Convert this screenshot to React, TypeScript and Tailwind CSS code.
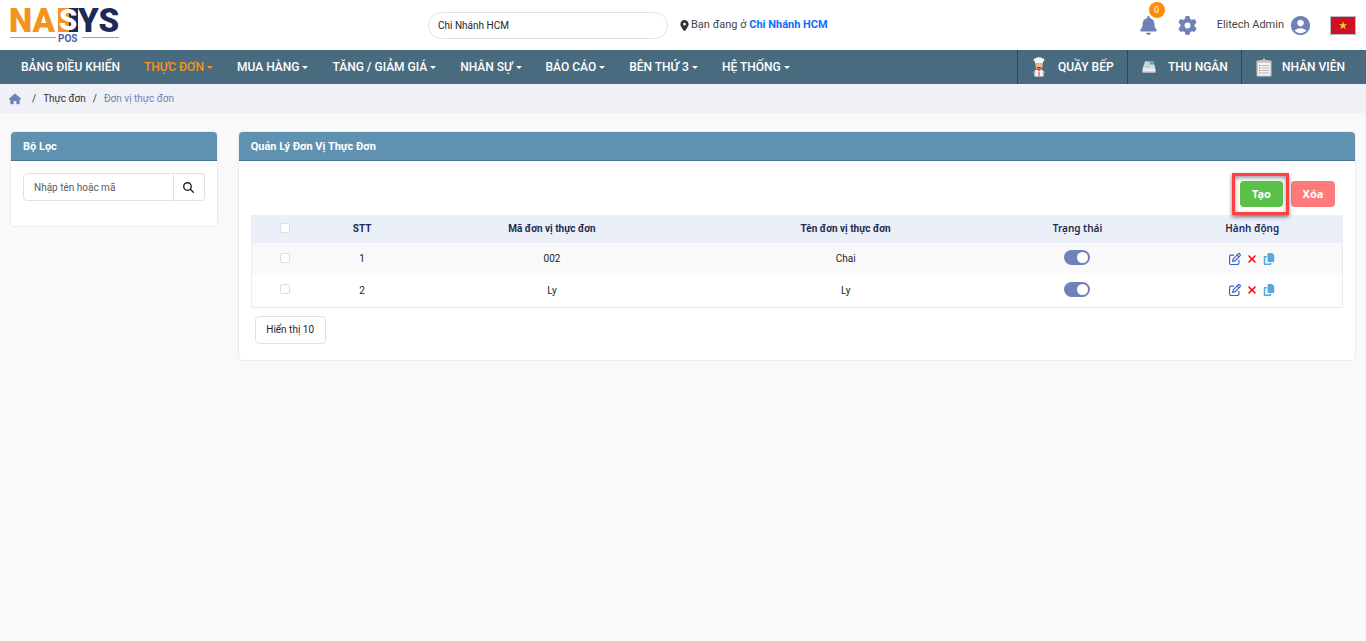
import { useState } from 'react'
import { FaBell, FaCopy, FaGear, FaHouse, FaLocationDot, FaMagnifyingGlass, FaRegPenToSquare, FaXmark } from 'react-icons/fa6'
import { MdAccountCircle } from 'react-icons/md'

type MenuItem = { label: string; dropdown: boolean; active?: boolean }
type Unit = { id: number; code: string; name: string; enabled: boolean }

const menu: MenuItem[] = [
  { label: 'BẢNG ĐIỀU KHIỂN', dropdown: false },
  { label: 'THỰC ĐƠN', dropdown: true, active: true },
  { label: 'MUA HÀNG', dropdown: true },
  { label: 'TĂNG / GIẢM GIÁ', dropdown: true },
  { label: 'NHÂN SỰ', dropdown: true },
  { label: 'BÁO CÁO', dropdown: true },
  { label: 'BÊN THỨ 3', dropdown: true },
  { label: 'HỆ THỐNG', dropdown: true },
]

const initialUnits: Unit[] = [
  { id: 1, code: '002', name: 'Chai', enabled: true },
  { id: 2, code: 'Ly', name: 'Ly', enabled: true },
]

const Logo = () => (
  <svg width="114" height="50" viewBox="0 0 114 50" role="img" aria-label="NASYS POS">
    <g fontFamily="Roboto, sans-serif" fontWeight="900" fontSize="33">
      <text x="0" y="32" fill="#f39320">NA</text>
      <rect x="49" y="8" width="11" height="24" fill="#f39320" />
      <rect x="60" y="8" width="9" height="24" fill="#1b2a5b" />
      <text x="50" y="30" fontSize="29" fill="#fff">S</text>
      <text x="69" y="32" fill="#1b2a5b">YS</text>
    </g>
    <path d="M1 37.500H47M73 37.500H110" stroke="#9aa3b5" strokeWidth="1" />
    <text x="49" y="42" fill="#4a64a5" fontFamily="Roboto, sans-serif" fontWeight="700" fontSize="10">POS</text>
  </svg>
)

const ChefIcon = () => (
  <svg width="14" height="20" viewBox="0 0 14 20">
    <path d="M3 6.500V4.500C.8 4 1.300 1.200 3.500 1.500 4.800-.3 9.200-.3 10.500 1.500c2.200-.3 2.700 2.500.5 3v2z" fill="#f5f5f5" />
    <path d="M3.500 6.500h7v2.500c0 2-1.500 3.500-3.500 3.500S3.500 11 3.500 9z" fill="#f3b98c" />
    <path d="M5 10h4v1c-1 .7-3 .7-4 0z" fill="#7a3b2e" />
    <path d="M4.500 12.500h5L7 15z" fill="#d8362f" />
    <path d="M2.500 19.500v-4.500c0-1.500 1-2.200 2.500-2.500l2 2 2-2c1.500.3 2.500 1 2.500 2.500v4.500z" fill="#f5f5f5" />
    <path d="M1.500 14.500h2v2h-2zM10.500 14.500h2v2h-2z" fill="#e9a77b" />
    <path d="M6 16h2M6 18h2" stroke="#c0392b" />
  </svg>
)

const RegisterIcon = () => (
  <svg width="14" height="12" viewBox="0 0 14 12">
    <path d="M3 .500h8.500l2 7.500H.5z" fill="#d7dde0" />
    <path d="M7.500 1h4l.7 2.500H8z" fill="#32b8a8" />
    <path d="M3.500 3h3M3 5.500h5" stroke="#b4bec3" />
    <path d="M.5 8h13v3H.5z" fill="#eef0f1" />
    <path d="M.5 10.500h13V12H.5z" fill="#a9b4ba" />
  </svg>
)

const ClipboardIcon = () => (
  <svg width="16" height="19" viewBox="0 0 16 19">
    <rect x=".5" y="2.500" width="15" height="16" rx="1" fill="#cbcbcb" />
    <rect x="2" y="5" width="12" height="12.500" fill="#f5f5f5" />
    <path d="M4 4V2h2.500a1.500 1.500 0 013 0H12v2z" fill="#c4c4c4" />
    <path d="M5.500 7.500H13M5.500 10H13M5.500 12.500H13M5.500 15H13" stroke="#b5b5b5" />
    <path d="M3 7.500h1.500M3 15h1.500" stroke="#4caf50" />
    <path d="M3 10h1.500M3 12.500h1.500" stroke="#e05550" />
  </svg>
)

const FlagIcon = () => (
  <svg width="26" height="19" viewBox="0 0 26 19">
    <rect x=".5" y=".5" width="25" height="18" fill="#ce1126" stroke="#b9bcc4" />
    <path d="M13 5.200l1 3h3.200l-2.600 1.900 1 3.100-2.600-1.900-2.600 1.900 1-3.100-2.600-1.900H12z" fill="#fcd116" />
  </svg>
)

const stations = [
  { label: 'QUẦY BẾP', icon: <ChefIcon />, width: 'w-[110px]' },
  { label: 'THU NGÂN', icon: <RegisterIcon />, width: 'w-[114px]' },
  { label: 'NHÂN VIÊN', icon: <ClipboardIcon />, width: 'w-[125px]' },
]

const checkbox = 'block w-[10px] h-[10px] mx-auto appearance-none rounded-[2px] border border-[#dcdde1] bg-white checked:bg-[#6f82b8]'

const Header = () => {
  const [branch, setBranch] = useState('Chi Nhánh HCM')

  return (
    <header className="h-[50px] flex items-center bg-white pl-[9px] pr-[10px]">
      <div className="w-[419px] shrink-0">
        <a href="#" className="inline-block align-middle"><Logo /></a>
      </div>
      <div className="flex items-center gap-[11px]">
        <input
          aria-label="Chi nhánh"
          value={branch}
          onChange={(e) => setBranch(e.target.value)}
          className="w-60 h-[27px] rounded-full border border-[#dee2e6] bg-white px-[9px] text-[10px] text-[#212529]"
        />
        <p className="flex items-center gap-px text-[11px] text-[#444]">
          <FaLocationDot size={11} className="text-[#333]" />
          <span>Bạn đang ở <b className="font-bold text-[#0d6efd]">Chi Nhánh HCM</b></span>
        </p>
      </div>
      <div className="flex-1 flex items-center justify-end text-[#6f82b8]">
        <button aria-label="Thông báo" className="relative mr-5">
          <FaBell size={19} />
          <span className="absolute -top-[14px] left-[10px] w-4 h-4 rounded-full bg-[#ff8c00] text-[9px] leading-4 text-white">0</span>
        </button>
        <button aria-label="Cài đặt" className="mr-5"><FaGear size={19} /></button>
        <button className="flex items-center gap-[5px] mr-[18px] text-[11px] text-[#444]">
          Elitech Admin
          <MdAccountCircle size={23} className="text-[#6f82b8]" />
        </button>
        <button aria-label="Tiếng Việt"><FlagIcon /></button>
      </div>
    </header>
  )
}

const NavBar = () => (
  <nav className="h-[34px] flex bg-[#486b80] text-[12px] font-medium text-white">
    <div className="flex-1 flex items-center pl-[9px]">
      {menu.map((item) => (
        <a key={item.label} href="#" className={`flex items-center gap-[3px] px-3 ${item.active ? 'text-[#f7941d]' : ''}`}>
          {item.label}
          {item.dropdown && <span className="border-x-[3px] border-t-[3px] border-x-transparent border-t-current" />}
        </a>
      ))}
    </div>
    {stations.map((s) => (
      <a key={s.label} href="#" className={`${s.width} flex items-center border-l border-[#2c4757] pl-[14px]`}>
        <span className="w-[26px]">{s.icon}</span>
        {s.label}
      </a>
    ))}
  </nav>
)

const FilterCard = () => (
  <section className="h-24 rounded border border-[#ececee] bg-white">
    <h2 className="h-[29px] rounded-t border-b border-[#487591] bg-[#5f91b1] px-3 text-[11px] leading-[29px] font-bold text-white">Bộ Lọc</h2>
    <form className="flex p-3" onSubmit={(e) => e.preventDefault()}>
      <input
        aria-label="Nhập tên hoặc mã"
        placeholder="Nhập tên hoặc mã"
        className="min-w-0 flex-1 h-7 rounded-l border border-[#dee2e6] px-[10px] text-[10px] placeholder:text-[#595c5f]"
      />
      <button aria-label="Tìm" className="w-[31px] h-7 flex items-center justify-center rounded-r border border-l-0 border-[#dee2e6] text-[#212529]">
        <FaMagnifyingGlass size={11} />
      </button>
    </form>
  </section>
)

const UnitsCard = () => {
  const [units, setUnits] = useState(initialUnits)

  const toggle = (id: number) => {
    setUnits(units.map((u) => (u.id === id ? { ...u, enabled: !u.enabled } : u)))
  }

  return (
    <section className="rounded border border-[#ececee] bg-white">
      <h2 className="h-[29px] rounded-t border-b border-[#487591] bg-[#5f91b1] px-3 text-[11px] leading-[29px] font-bold text-white">Quản Lý Đơn Vị Thực Đơn</h2>
      <div className="px-3 pt-5 pb-4">
        <div className="flex justify-end gap-2 pr-2 pb-2 font-['Noto_Sans',sans-serif] text-[11px] font-bold text-white">
          <div className="relative">
            <button className="w-[43px] h-[26px] rounded bg-[#5bc14b]">Tạo</button>
            <span className="absolute -left-2 -right-[6px] -inset-y-2 border-3 border-[#fb4141] shadow-[0_2px_4px_rgba(0,0,0,0.5),inset_0_2px_4px_rgba(0,0,0,0.4)] pointer-events-none" />
          </div>
          <button className="w-[44px] h-[26px] rounded bg-[#ff7b7b]">Xóa</button>
        </div>

        <table className="w-full table-fixed border border-t-0 border-[#ececee] text-center text-[10px] text-[#212529]">
          <thead>
            <tr className="h-7 bg-[#ebeff8] text-[#1f2b50]">
              <th className="w-[68px] pb-[3px]"><input type="checkbox" aria-label="Chọn tất cả" className={checkbox} /></th>
              <th className="w-[86px] pb-px font-bold">STT</th>
              <th className="pb-px font-bold">Mã đơn vị thực đơn</th>
              <th className="pb-px font-bold">Tên đơn vị thực đơn</th>
              <th className="w-[170px] pb-px font-['Noto_Sans',sans-serif] font-semibold">Trạng thái</th>
              <th className="w-[180px] pb-px font-['Noto_Sans',sans-serif] font-semibold">Hành động</th>
            </tr>
          </thead>
          <tbody>
            {units.map((unit) => (
              <tr key={unit.id} className="h-8 odd:bg-[#f9f9f9]">
                <td className="pb-[3px]"><input type="checkbox" aria-label={`Chọn ${unit.name}`} className={checkbox} /></td>
                <td className="pb-px">{unit.id}</td>
                <td className="pb-px">{unit.code}</td>
                <td className="pb-px">{unit.name}</td>
                <td className="pb-[3px]">
                  <input
                    type="checkbox"
                    role="switch"
                    aria-label={`Trạng thái ${unit.name}`}
                    checked={unit.enabled}
                    onChange={() => toggle(unit.id)}
                    className="block w-[26px] h-[15px] mx-auto appearance-none rounded-full bg-gray-300 checked:bg-[#6f82b8] before:block before:w-[11px] before:h-[11px] before:m-[2px] before:rounded-full before:bg-white checked:before:ml-[13px]"
                  />
                </td>
                <td className="pb-px">
                  <div className="flex items-center justify-center gap-[5px]">
                    <button aria-label="Sửa" className="text-[#3d5fc9]"><FaRegPenToSquare size={12} /></button>
                    <button aria-label="Xóa" className="text-[#f00]"><FaXmark size={12} /></button>
                    <button aria-label="Sao chép" className="text-[#55a9dd]"><FaCopy size={12} /></button>
                  </div>
                </td>
              </tr>
            ))}
          </tbody>
        </table>

        <button className="block mt-2 ml-1 w-[71px] h-7 rounded border border-[#dee2e6] text-[10px] text-[#212529]">Hiển thị 10</button>
      </div>
    </section>
  )
}

const App = () => (
  <div className="min-h-screen bg-[#f9f9f9] font-[Roboto,sans-serif]">
    <Header />
    <NavBar />
    <nav aria-label="Breadcrumb" className="h-[29px] flex items-center gap-[7px] bg-[#f0f1f6] pl-[9px] text-[10px] text-[#333]">
      <a href="#" aria-label="Trang chủ" className="mr-1 text-[#6f82b8]"><FaHouse size={12} /></a>
      <span>/</span>
      <a href="#">Thực đơn</a>
      <span>/</span>
      <span className="text-[#6f82b8]">Đơn vị thực đơn</span>
    </nav>
    <main className="flex items-start pt-[18px]">
      <aside className="w-1/6 px-[10px]"><FilterCard /></aside>
      <div className="w-5/6 px-[10px]"><UnitsCard /></div>
    </main>
  </div>
)

export default App
